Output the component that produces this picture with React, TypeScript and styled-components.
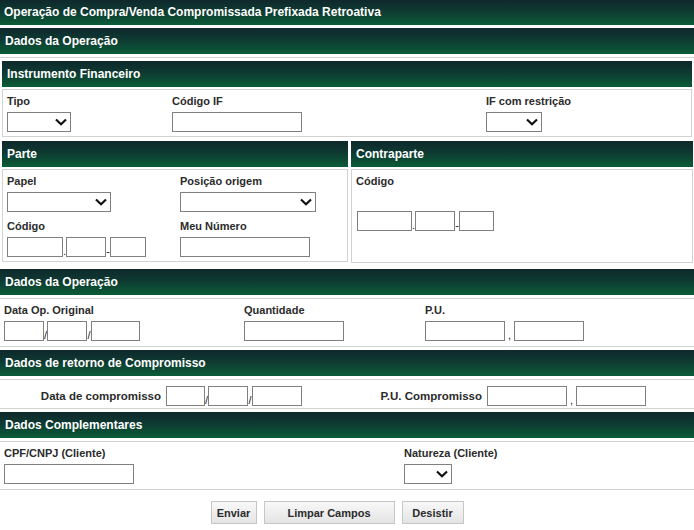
import styled, { createGlobalStyle } from 'styled-components';

const GlobalStyle = createGlobalStyle`
  body {
    margin: 0;
    background: #ffffff;
    font-family: "Liberation Sans", Arial, sans-serif;
  }
`;

const barGradient = 'linear-gradient(to bottom, #0f282c 0%, #0e3a32 45%, #0b5c37 100%)';
const lineColor = '#d2d2d2';

const Page = styled.div`
  width: 694px;
  color: #2b2b2b;
`;

const TitleBar = styled.div`
  height: 25px;
  line-height: 25px;
  padding-left: 4px;
  background: ${barGradient};
  color: #ffffff;
  font-size: 12px;
  font-weight: bold;
`;

const SectionBar = styled.div<{ $gap?: number }>`
  height: 26px;
  line-height: 26px;
  margin-top: ${(p) => p.$gap ?? 3}px;
  padding-left: 5px;
  background: ${barGradient};
  color: #ffffff;
  font-size: 12px;
  font-weight: bold;
`;

const SubBar = styled.div`
  height: 26px;
  line-height: 26px;
  padding-left: 5px;
  background: ${barGradient};
  color: #ffffff;
  font-size: 12px;
  font-weight: bold;
`;

const Panel = styled.div`
  margin-top: 3px;
  border-top: 1px solid ${lineColor};
  padding: 3px 2px 0;
`;

const PanelBody = styled.div`
  margin-top: 2px;
  border: 1px solid ${lineColor};
  padding: 4px;
`;

const Split = styled.div`
  display: grid;
  grid-template-columns: 346px 342px;
  column-gap: 3px;
  margin-top: 4px;
  padding: 0 2px;
`;

const FieldGrid = styled.div<{ $cols: string; $rowGap?: number }>`
  display: grid;
  grid-template-columns: ${(p) => p.$cols};
  row-gap: ${(p) => p.$rowGap ?? 0}px;
`;

const Field = styled.div`
  display: flex;
  flex-direction: column;
  align-items: flex-start;
`;

const Label = styled.div`
  font-size: 11px;
  font-weight: bold;
  line-height: 14px;
  margin-bottom: 4px;
  white-space: nowrap;
`;

const FormRow = styled.div`
  margin-top: 3px;
  border-top: 1px solid ${lineColor};
  border-bottom: 1px solid ${lineColor};
  padding: 4px 4px 5px;
`;

const InlineRow = styled.div`
  display: flex;
  align-items: center;
  margin-top: 3px;
  border-top: 1px solid ${lineColor};
  border-bottom: 1px solid ${lineColor};
  padding: 6px 0 2px;
`;

const InlineLabel = styled.div<{ $w: number }>`
  width: ${(p) => p.$w}px;
  text-align: right;
  font-size: 11.5px;
  font-weight: bold;
  margin-right: 5px;
  white-space: nowrap;
`;

const Group = styled.div`
  display: inline-flex;
  align-items: flex-end;
`;

const Sep = styled.span<{ $w?: number }>`
  width: ${(p) => p.$w ?? 3}px;
  font-size: 11px;
  line-height: 12px;
  text-align: center;
  color: #222;
`;

const TextInput = styled.input<{ $w: number }>`
  box-sizing: border-box;
  width: ${(p) => p.$w}px;
  height: 20px;
  margin: 0;
  padding: 0 2px;
  border: 1px solid #808080;
  border-radius: 0;
  background: #ffffff;
  font-family: inherit;
  font-size: 11px;
  outline: none;
`;

const SelectWrap = styled.span<{ $w: number }>`
  position: relative;
  display: inline-block;
  width: ${(p) => p.$w}px;
  height: 20px;
`;

const NativeSelect = styled.select`
  appearance: none;
  box-sizing: border-box;
  width: 100%;
  height: 100%;
  margin: 0;
  padding: 0 2px;
  border: 1px solid #808080;
  border-radius: 0;
  background: #ffffff;
  font-family: inherit;
  font-size: 11px;
  outline: none;
`;

const Chevron = styled.svg`
  position: absolute;
  right: 4px;
  top: 6px;
  pointer-events: none;
`;

const ContraBody = styled(PanelBody)`
  height: 84px;
`;

const ContraInputs = styled.div`
  margin-top: 23px;
  padding-left: 1px;
`;

const ButtonBar = styled.div`
  display: flex;
  justify-content: center;
  gap: 7px;
  margin-top: 11px;
  padding-right: 20px;
`;

const Button = styled.button<{ $w: number }>`
  box-sizing: border-box;
  width: ${(p) => p.$w}px;
  height: 23px;
  padding: 0;
  border: 1px solid #c6c6c6;
  border-radius: 0;
  background: linear-gradient(to bottom, #f8f8f8, #e4e4e4);
  color: #2b2b2b;
  font-family: inherit;
  font-size: 11px;
  font-weight: bold;
`;

const Select = ({ w }: { w: number }) => (
  <SelectWrap $w={w}>
    <NativeSelect>
      <option></option>
    </NativeSelect>
    <Chevron width="12" height="8" viewBox="0 0 12 8">
      <polyline points="1,1.5 6,6.2 11,1.5" fill="none" stroke="#111" strokeWidth="2.2" />
    </Chevron>
  </SelectWrap>
);

const CodeInputs = ({ widths }: { widths: number[] }) => (
  <Group>
    <TextInput $w={widths[0]} />
    <Sep>.</Sep>
    <TextInput $w={widths[1]} />
    <Sep $w={4}>-</Sep>
    <TextInput $w={widths[2]} />
  </Group>
);

const DateInputs = ({ widths }: { widths: number[] }) => (
  <Group>
    <TextInput $w={widths[0]} />
    <Sep>/</Sep>
    <TextInput $w={widths[1]} />
    <Sep $w={4}>/</Sep>
    <TextInput $w={widths[2]} />
  </Group>
);

const PriceInputs = () => (
  <Group>
    <TextInput $w={80} />
    <Sep $w={9}>,</Sep>
    <TextInput $w={70} />
  </Group>
);

export default function App() {
  return (
    <>
      <GlobalStyle />
      <Page>
        <TitleBar>Operação de Compra/Venda Compromissada Prefixada Retroativa</TitleBar>
        <SectionBar>Dados da Operação</SectionBar>

        <Panel>
          <SubBar>Instrumento Financeiro</SubBar>
          <PanelBody>
            <FieldGrid $cols="165px 314px 1fr">
              <Field>
                <Label>Tipo</Label>
                <Select w={64} />
              </Field>
              <Field>
                <Label>Código IF</Label>
                <TextInput $w={130} />
              </Field>
              <Field>
                <Label>IF com restrição</Label>
                <Select w={56} />
              </Field>
            </FieldGrid>
          </PanelBody>
        </Panel>

        <Split>
          <div>
            <SubBar>Parte</SubBar>
            <PanelBody>
              <FieldGrid $cols="173px 1fr" $rowGap={7}>
                <Field>
                  <Label>Papel</Label>
                  <Select w={104} />
                </Field>
                <Field>
                  <Label>Posição origem</Label>
                  <Select w={136} />
                </Field>
                <Field>
                  <Label>Código</Label>
                  <CodeInputs widths={[56, 40, 36]} />
                </Field>
                <Field>
                  <Label>Meu Número</Label>
                  <TextInput $w={130} />
                </Field>
              </FieldGrid>
            </PanelBody>
          </div>
          <div>
            <SubBar>Contraparte</SubBar>
            <ContraBody>
              <Label>Código</Label>
              <ContraInputs>
                <CodeInputs widths={[55, 40, 35]} />
              </ContraInputs>
            </ContraBody>
          </div>
        </Split>

        <SectionBar $gap={6}>Dados da Operação</SectionBar>
        <FormRow>
          <FieldGrid $cols="240px 181px 1fr">
            <Field>
              <Label>Data Op. Original</Label>
              <DateInputs widths={[40, 40, 49]} />
            </Field>
            <Field>
              <Label>Quantidade</Label>
              <TextInput $w={100} />
            </Field>
            <Field>
              <Label>P.U.</Label>
              <PriceInputs />
            </Field>
          </FieldGrid>
        </FormRow>

        <SectionBar>Dados de retorno de Compromisso</SectionBar>
        <InlineRow>
          <InlineLabel $w={161}>Data de compromisso</InlineLabel>
          <DateInputs widths={[39, 40, 50]} />
          <InlineLabel $w={180}>P.U. Compromisso</InlineLabel>
          <PriceInputs />
        </InlineRow>

        <SectionBar>Dados Complementares</SectionBar>
        <FormRow>
          <FieldGrid $cols="400px 1fr">
            <Field>
              <Label>CPF/CNPJ (Cliente)</Label>
              <TextInput $w={130} />
            </Field>
            <Field>
              <Label>Natureza (Cliente)</Label>
              <Select w={48} />
            </Field>
          </FieldGrid>
        </FormRow>

        <ButtonBar>
          <Button $w={46}>Enviar</Button>
          <Button $w={131}>Limpar Campos</Button>
          <Button $w={62}>Desistir</Button>
        </ButtonBar>
      </Page>
    </>
  );
}
